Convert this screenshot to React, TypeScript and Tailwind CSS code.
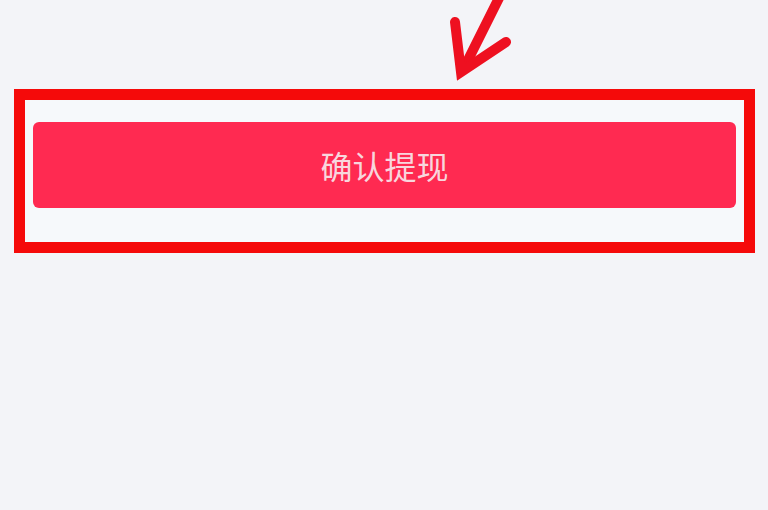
import React from "react";

export default function App() {
  return (
    <div className="relative w-[768px] h-[510px] overflow-hidden bg-[#f3f4f8]" style={{ fontFamily: '"Noto Sans CJK SC", "Noto Sans", sans-serif' }}>
      <div className="h-[89px]" />
      <div className="ml-[14px] mr-[13px] border-[11px] border-[#f50a0a] bg-[#f6f9fb] pt-[22px] pb-[34px] pl-[8px] pr-[8px]">
        <button className="w-full h-[86px] rounded-[6px] bg-[#ff2a51] text-[#f8d6dd] text-[32px] flex items-center justify-center">
          确认提现
        </button>
      </div>
      <svg className="absolute left-0 top-0" width="768" height="100" viewBox="0 0 768 100">
        <g stroke="#ee1020" strokeWidth="10" strokeLinecap="round" fill="none" strokeLinejoin="miter">
          <line x1="500" y1="-4" x2="464" y2="68" />
          <polyline points="455,22 461,72 506,42" />
        </g>
      </svg>
    </div>
  );
}
